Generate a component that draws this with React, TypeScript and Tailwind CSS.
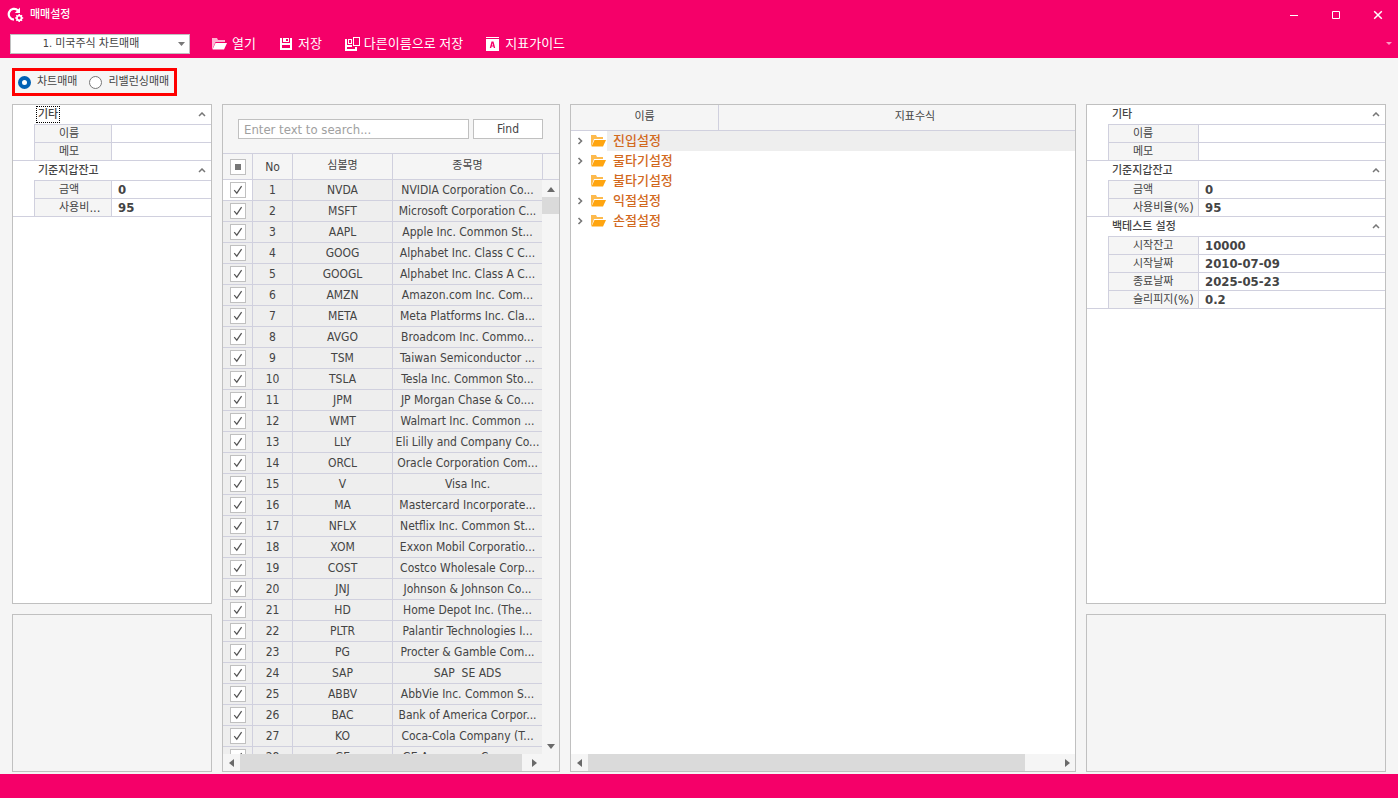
import { useState } from "react";
import clsx from "clsx";

type Field = { label: string; unit?: string; value: string; name: string };
type Section = { title: string; fields: Field[] };

const walletSections: Section[] = [
    {
        title: "기타",
        fields: [
            { label: "이름", value: "", name: "name" },
            { label: "메모", value: "", name: "memo" },
        ],
    },
    {
        title: "기준지갑잔고",
        fields: [
            { label: "금액", value: "0", name: "amount" },
            { label: "사용비율", unit: "(%)", value: "95", name: "ratio" },
        ],
    },
];

const leftSections: Section[] = [
    walletSections[0],
    {
        title: "기준지갑잔고",
        fields: [
            { label: "금액", value: "0", name: "amount" },
            { label: "사용비", unit: "...", value: "95", name: "ratio" },
        ],
    },
];

const backtestSections: Section[] = [
    ...walletSections,
    {
        title: "백테스트 설정",
        fields: [
            { label: "시작잔고", value: "10000", name: "balance" },
            { label: "시작날짜", value: "2010-07-09", name: "start" },
            { label: "종료날짜", value: "2025-05-23", name: "end" },
            { label: "슬리피지", unit: "(%)", value: "0.2", name: "slippage" },
        ],
    },
];

const symbols: [string, string][] = [
    ["NVDA", "NVIDIA Corporation Co..."],
    ["MSFT", "Microsoft Corporation C..."],
    ["AAPL", "Apple Inc. Common St..."],
    ["GOOG", "Alphabet Inc. Class C C..."],
    ["GOOGL", "Alphabet Inc. Class A C..."],
    ["AMZN", "Amazon.com Inc. Com..."],
    ["META", "Meta Platforms Inc. Cla..."],
    ["AVGO", "Broadcom Inc. Commo..."],
    ["TSM", "Taiwan Semiconductor ..."],
    ["TSLA", "Tesla Inc. Common Sto..."],
    ["JPM", "JP Morgan Chase & Co...."],
    ["WMT", "Walmart Inc. Common ..."],
    ["LLY", "Eli Lilly and Company Co..."],
    ["ORCL", "Oracle Corporation Com..."],
    ["V", "Visa Inc."],
    ["MA", "Mastercard Incorporate..."],
    ["NFLX", "Netflix Inc. Common St..."],
    ["XOM", "Exxon Mobil Corporatio..."],
    ["COST", "Costco Wholesale Corp..."],
    ["JNJ", "Johnson & Johnson Co..."],
    ["HD", "Home Depot Inc. (The..."],
    ["PLTR", "Palantir Technologies I..."],
    ["PG", "Procter & Gamble Com..."],
    ["SAP", "SAP  SE ADS"],
    ["ABBV", "AbbVie Inc. Common S..."],
    ["BAC", "Bank of America Corpor..."],
    ["KO", "Coca-Cola Company (T..."],
    ["GE", "GE Aerospace Commo..."],
];

const treeItems = [
    { name: "진입설정", hasChildren: true },
    { name: "물타기설정", hasChildren: true },
    { name: "불타기설정", hasChildren: false },
    { name: "익절설정", hasChildren: true },
    { name: "손절설정", hasChildren: true },
];

export default function App() {
    return (
        <div className="flex h-screen flex-col overflow-hidden bg-[#f5f5f5] font-['DejaVu_Sans_Condensed','Noto_Sans_CJK_KR',sans-serif] text-[11px] text-[#444444]">
            <TitleBar />
            <Toolbar />
            <main className="flex min-h-0 flex-1 flex-col gap-2 px-3 pt-2.5 pb-0.5">
                <ModeSwitch />
                <div className="flex min-h-0 flex-1 gap-2.5">
                    <div className="flex w-[200px] shrink-0 flex-col gap-2.5">
                        <PropertyGrid id="chart" sections={leftSections} labelClass="w-[77px]" focused />
                        <div className="h-[158px] shrink-0 border border-[#c0c0c0]" />
                    </div>
                    <SymbolPanel />
                    <TreePanel />
                    <div className="flex w-[300px] shrink-0 flex-col gap-2.5">
                        <PropertyGrid id="backtest" sections={backtestSections} labelClass="w-[90px]" />
                        <div className="h-[158px] shrink-0 border border-[#c0c0c0]" />
                    </div>
                </div>
            </main>
            <footer className="h-6 shrink-0 bg-[#f50069]" />
        </div>
    );
}

function TitleBar() {
    return (
        <header className="flex h-[30px] shrink-0 items-center bg-[#f50069] pl-[7px] text-white">
            <svg width="17" height="16" viewBox="0 0 17 16" fill="none" stroke="currentColor">
                <path d="M11 3.4A5.400 5.400 0 1 0 7 12.600" strokeWidth="2.200" />
                <path d="M13 .5v5.400H7.800z" fill="currentColor" stroke="none" />
                <circle cx="12.200" cy="11" r="2.300" strokeWidth="1.700" />
                <path d="M12.200 7v1.500M12.200 13.500V15M8.200 11h1.500M14.700 11h1.500M9.400 8.200l1 1M14 12.800l1 1M15 8.200l-1 1M10.400 12.800l-1 1" strokeWidth="1.500" />
            </svg>
            <h1 className="ml-1.5 flex-1 font-medium">매매설정</h1>
            <div className="flex h-full">
                <WindowButton label="최소화">
                    <path d="M3 6.500h8" />
                </WindowButton>
                <WindowButton label="최대화">
                    <path d="M3.500 2.500h7v7h-7z" />
                </WindowButton>
                <WindowButton label="닫기">
                    <path d="M3.200 2.200l7.600 7.600M10.800 2.200L3.200 9.800" strokeWidth="1.500" />
                </WindowButton>
            </div>
        </header>
    );
}

function WindowButton({ label, children }: { label: string; children: React.ReactNode }) {
    return (
        <button aria-label={label} className="flex w-[42px] items-center justify-center hover:bg-white/20">
            <svg width="12" height="12" viewBox="0 0 12 12" fill="none" stroke="currentColor">
                {children}
            </svg>
        </button>
    );
}

function Toolbar() {
    return (
        <nav className="flex h-7 shrink-0 items-center gap-[22px] bg-[#f50069] pr-1.5 pl-2.5 text-[13px] text-white">
            <div className="grid w-[180px] items-center text-[11px] text-[#444444]">
                <select
                    aria-label="매매 종류"
                    className="col-start-1 row-start-1 h-5 w-full appearance-none border border-[#c0c0c0] bg-white pr-[18px] [text-align-last:center]"
                >
                    <option>1. 미국주식 차트매매</option>
                </select>
                <svg width="7" height="4" viewBox="0 0 7 4" className="pointer-events-none col-start-1 row-start-1 mr-[5px] justify-self-end">
                    <path d="M0 0h7L3.500 4z" fill="#777777" />
                </svg>
            </div>
            <ToolButton
                label="열기"
                icon={
                    <>
                        <path d="M1 13V2h5l1 2h7v2H4.500L1.500 13z" fillOpacity=".7" />
                        <path d="M4.500 7H16l-3 6.500H1.500z" />
                    </>
                }
            />
            <ToolButton
                label="저장"
                icon={<path fillRule="evenodd" d="M3 2h2v5h8V2h2v12H3zM5 9v3h8V9zM6 2h6v4H6zM9 3v2h2V3z" />}
            />
            <ToolButton
                label="다른이름으로 저장"
                icon={
                    <>
                        <path d="M2 3h2v6h5v2H4v2h8v-2h2v4H2z" />
                        <path fillRule="evenodd" d="M5 3h4v5H5zM6 4v3h2V4z" />
                        <path fillRule="evenodd" d="M10 1h7v9h-7zM11 2v7h5V2z" />
                    </>
                }
            />
            <ToolButton
                label="지표가이드"
                icon={
                    <>
                        <path d="M2 1h13v1H2z" />
                        <path fillRule="evenodd" d="M2 3h13v12H2zM7.500 5.500L5.800 12h1.400l.4-1.500h1.800l.4 1.500h1.400L9.500 5.500zM8.500 7l.6 2.500H7.900z" />
                    </>
                }
            />
            <svg width="6" height="4" viewBox="0 0 6 4" className="ml-auto opacity-60">
                <path d="M0 0h6L3 3z" fill="currentColor" />
            </svg>
        </nav>
    );
}

function ToolButton({ label, icon }: { label: string; icon: React.ReactNode }) {
    return (
        <button className="flex h-full items-center gap-1 whitespace-nowrap hover:bg-white/20">
            <svg width="16" height="16" viewBox="1 0 16 16" fill="currentColor">
                {icon}
            </svg>
            {label}
        </button>
    );
}

function ModeSwitch() {
    const [mode, setMode] = useState("chart");
    const modes = [
        { id: "chart", label: "차트매매" },
        { id: "rebalance", label: "리밸런싱매매" },
    ];

    return (
        <div className="flex h-7 shrink-0 items-center gap-3 self-start border-3 border-[#ff0000] pr-[5px] pl-[3px]">
            {modes.map((m) => (
                <label key={m.id} className="flex items-center gap-1.5">
                    <input
                        type="radio"
                        name="mode"
                        checked={mode === m.id}
                        onChange={() => setMode(m.id)}
                        className="size-[13px] appearance-none rounded-full border border-[#777777] bg-white checked:border-4 checked:border-[#0061b5]"
                    />
                    {m.label}
                </label>
            ))}
        </div>
    );
}

function PropertyGrid({ id, sections, labelClass, focused }: { id: string; sections: Section[]; labelClass: string; focused?: boolean }) {
    return (
        <div className="min-h-0 flex-1 overflow-hidden border border-[#c0c0c0] bg-white">
            {sections.map((section, i) => (
                <section key={section.title} className="border-b border-[#d0d0de]">
                    <button className="flex h-[19px] w-full items-center justify-between pr-[5px] pl-[23px] font-medium">
                        <span className={clsx("border border-dotted px-px leading-[15px]", focused && i === 0 ? "border-black" : "border-transparent")}>
                            {section.title}
                        </span>
                        <svg width="8" height="5" viewBox="0 0 8 5" fill="none" stroke="#777777" strokeWidth="1.500">
                            <path d="M1 4l3-3 3 3" />
                        </svg>
                    </button>
                    <div className="ml-[21px] divide-y divide-[#d0d0de] border-t border-l border-[#d0d0de]">
                        {section.fields.map((field, j) => (
                            <div key={field.name} className={clsx("flex", j === section.fields.length - 1 ? "h-[17px]" : "h-[18px]")}>
                                <label
                                    htmlFor={`${id}-${field.name}`}
                                    className={clsx(
                                        "flex shrink-0 items-center border-r border-[#d0d0de] bg-[#f5f5f5] pl-6 leading-4 whitespace-nowrap",
                                        labelClass
                                    )}
                                >
                                    {field.label}
                                    {field.unit && <span className="text-[13px]">{field.unit}</span>}
                                </label>
                                <input
                                    id={`${id}-${field.name}`}
                                    defaultValue={field.value}
                                    className="min-w-0 flex-1 px-1.5 text-[13px] leading-4 font-bold outline-none"
                                />
                            </div>
                        ))}
                    </div>
                </section>
            ))}
        </div>
    );
}

function SymbolPanel() {
    return (
        <div className="flex w-[338px] shrink-0 flex-col border border-[#c0c0c0]">
            <form className="flex h-12 shrink-0 items-center gap-1 pr-4 pl-[15px]" onSubmit={(e) => e.preventDefault()}>
                <input
                    aria-label="Search"
                    placeholder="Enter text to search..."
                    className="h-5 min-w-0 flex-1 border border-[#c0c0c0] bg-white px-[5px] text-[13px] outline-none placeholder:text-[#a0a0a0]"
                />
                <button className="h-5 w-[70px] border border-[#c0c0c0] bg-white text-[12px]">Find</button>
            </form>
            <div className="flex min-h-0 flex-1">
                <div className="min-h-0 flex-1 overflow-hidden">
                    <table className="w-full table-fixed border-separate border-spacing-0 text-center text-[12px]">
                        <colgroup>
                            <col className="w-[30px]" />
                            <col className="w-10" />
                            <col className="w-[100px]" />
                            <col />
                        </colgroup>
                        <thead>
                            <tr className="h-[27px]">
                                <th className="border-y border-r border-[#d0d0de] p-0">
                                    <CheckBox label="전체 선택" mixed />
                                </th>
                                <th className="border-y border-r border-[#d0d0de] p-0 font-normal">No</th>
                                <th className="border-y border-r border-[#d0d0de] p-0 text-[11px] font-normal">심볼명</th>
                                <th className="border-y border-[#d0d0de] p-0 text-[11px] font-normal">종목명</th>
                            </tr>
                        </thead>
                        <tbody>
                            {symbols.map(([code, name], i) => (
                                <tr key={code} className="h-[21px] bg-[#eeeeee]">
                                    <td className={clsx("border-r border-b border-[#d0d0de] p-0", i === 0 && "bg-white")}>
                                        <CheckBox label={code} />
                                    </td>
                                    <td className="border-r border-b border-[#d0d0de] p-0 leading-5">{i + 1}</td>
                                    <td className="border-r border-b border-[#d0d0de] p-0 leading-5">{code}</td>
                                    <td className="overflow-hidden border-b border-[#d0d0de] p-0 leading-5 whitespace-pre">{name}</td>
                                </tr>
                            ))}
                        </tbody>
                    </table>
                </div>
                <div className="flex w-[17px] shrink-0 flex-col">
                    <div className="h-[27px] shrink-0 border-y border-l border-[#d0d0de]" />
                    <ArrowButton label="위로" d="M5 3L9 8H1z" />
                    <div className="min-h-0 flex-1">
                        <div className="h-[17px] bg-[#dadada]" />
                    </div>
                    <ArrowButton label="아래로" d="M5 8L1 3h8z" />
                </div>
            </div>
            <div className="shrink-0 pr-[17px]">
                <ScrollBar thumbClass="w-[99%]" />
            </div>
        </div>
    );
}

function CheckBox({ label, mixed }: { label: string; mixed?: boolean }) {
    return (
        <span className="grid place-items-center">
            <input
                type="checkbox"
                aria-label={label}
                defaultChecked={!mixed}
                className="peer col-start-1 row-start-1 size-4 appearance-none border border-[#c0c0c0] bg-white"
            />
            {mixed ? (
                <span className="pointer-events-none col-start-1 row-start-1 size-1.5 bg-[#777777]" />
            ) : (
                <svg
                    width="10"
                    height="10"
                    viewBox="0 0 10 10"
                    fill="none"
                    stroke="#555555"
                    strokeWidth="1.200"
                    className="pointer-events-none invisible col-start-1 row-start-1 peer-checked:visible"
                >
                    <path d="M1.200 5.200L3.800 8.200 8.600 1.200" />
                </svg>
            )}
        </span>
    );
}

function ScrollBar({ thumbClass }: { thumbClass: string }) {
    return (
        <div className="flex h-[17px] bg-[#f5f5f5]">
            <ArrowButton label="왼쪽" d="M2 5L7 1v8z" />
            <div className="min-w-0 flex-1">
                <div className={clsx("h-full bg-[#dadada]", thumbClass)} />
            </div>
            <ArrowButton label="오른쪽" d="M8 5L3 1v8z" />
        </div>
    );
}

function ArrowButton({ label, d }: { label: string; d: string }) {
    return (
        <button aria-label={label} className="flex size-[17px] shrink-0 items-center justify-center">
            <svg width="10" height="10" viewBox="0 0 10 10" fill="#6a6a6a">
                <path d={d} />
            </svg>
        </button>
    );
}

function TreePanel() {
    return (
        <div className="flex min-w-0 flex-1 flex-col border border-[#c0c0c0] bg-white">
            <div className="flex h-[26px] shrink-0 items-center border-b border-[#d0d0de] bg-[#f5f5f5] text-center">
                <div className="flex h-full w-[148px] items-center justify-center border-r border-[#d0d0de]">이름</div>
                <div className="min-w-0 flex-1 pl-9">지표수식</div>
            </div>
            <ul className="min-h-0 flex-1 text-[13px] font-medium text-[#d2691e]">
                {treeItems.map((item, i) => (
                    <li key={item.name} className="flex h-5 items-center pl-1.5">
                        <button aria-label={item.name} className={clsx("mr-2 flex justify-center", !item.hasChildren && "invisible")}>
                            <svg width="6" height="8" viewBox="0 0 6 8" fill="none" stroke="#777777" strokeWidth="1.600">
                                <path d="M1.500 1l3 3-3 3" />
                            </svg>
                        </button>
                        <svg width="16" height="12" viewBox="0 0 16 12" className="shrink-0">
                            <path d="M0 11V0h5l1 2h6v2H3L.5 11z" fill="#fdba4d" />
                            <path d="M3.500 5H15l-3 6.500H.5z" fill="#ffa50f" />
                        </svg>
                        <span className={clsx("flex h-full min-w-0 flex-1 items-center pl-1.5", i === 0 && "bg-[#eeeeee]")}>{item.name}</span>
                    </li>
                ))}
            </ul>
            <ScrollBar thumbClass="w-[93%]" />
        </div>
    );
}
